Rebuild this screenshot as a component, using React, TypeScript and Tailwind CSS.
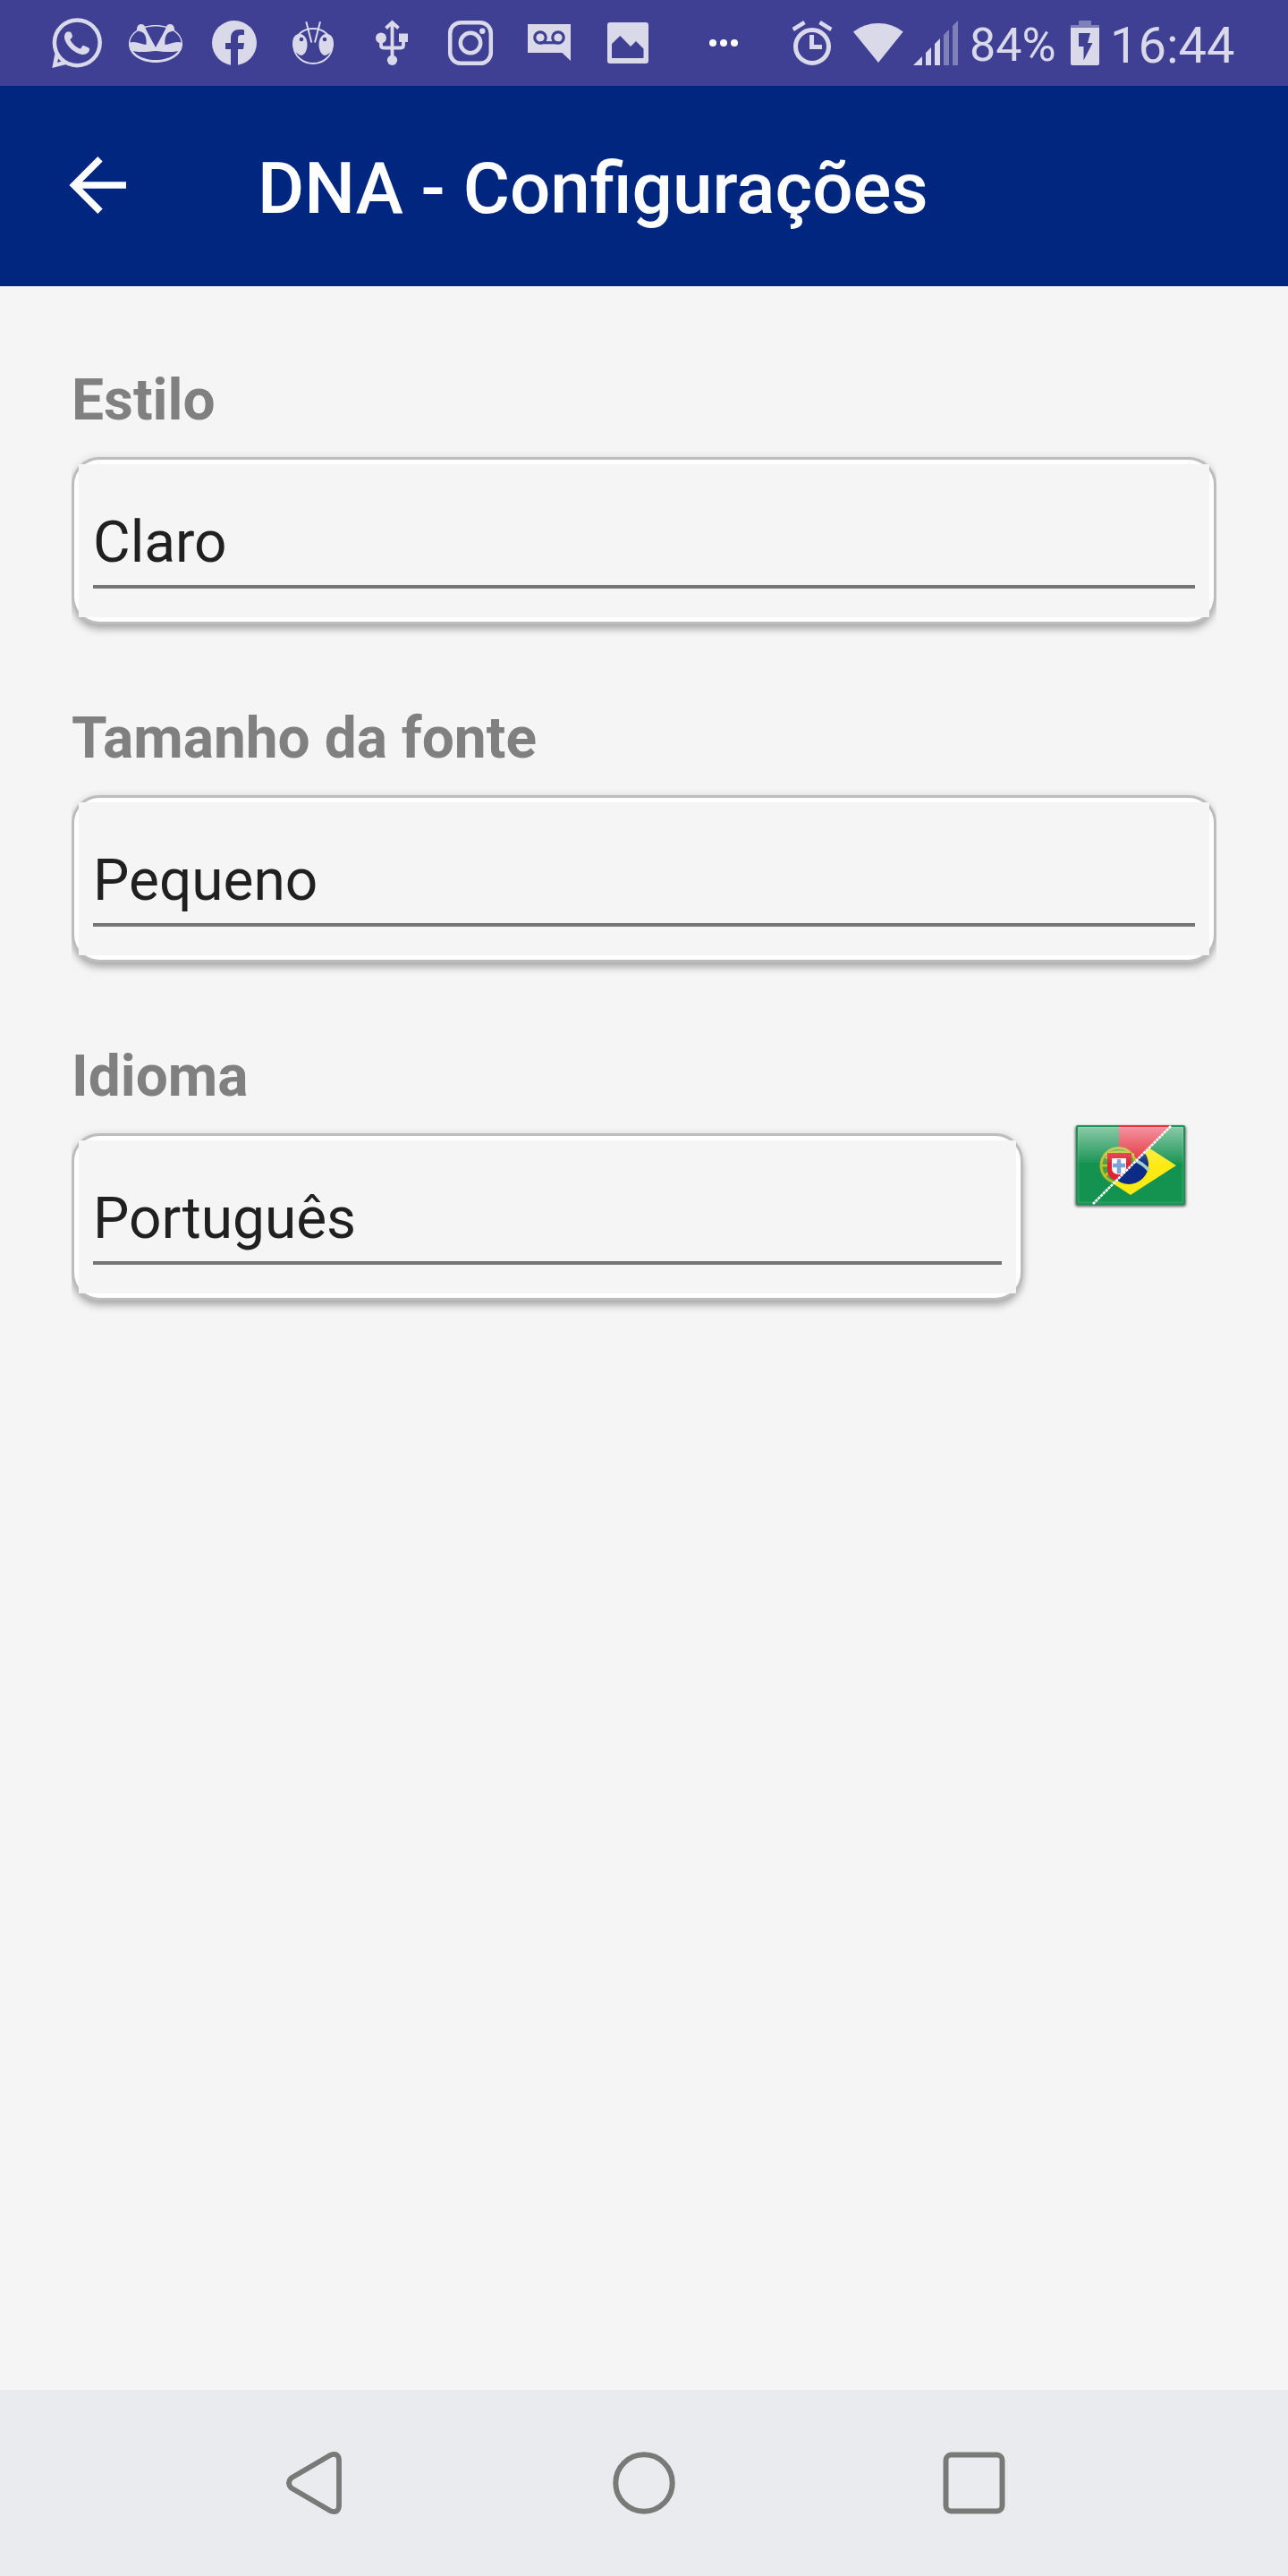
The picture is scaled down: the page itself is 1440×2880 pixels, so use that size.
import type { ReactNode } from 'react';

const INK = '#d9d9ea';
const BAR = '#3f4094';

/* Every status icon is drawn in screen coordinates; x is the left edge of its slot. */
function Slot({ x, w = 88, children }: { x: number; w?: number; children: ReactNode }) {
  return (
    <svg width={w} height={96} viewBox={`${x} 0 ${w} 96`} fill={INK} className="block shrink-0">
      {children}
    </svg>
  );
}

function StatusBar() {
  const arm =
    'M144 48 C152 45 158 50 163.5 50 C164 44 163 38 159 36 L153 34 C152.500 28 157 25.500 161 28 C163 33 170 46 174 53 V57 C165 58 152 59 145.500 56 Z';
  return (
    <header className="flex h-[96px] shrink-0 bg-[#3f4094] pl-[42px] text-[#d9d9ea]">
      <Slot x={42}>
        <circle cx="86.300" cy="47.800" r="25.400" fill="none" stroke={INK} strokeWidth="4.500" />
        <path d="M61.800 58 L58.300 76 L74 72 L72 67.500 L64 70 L66.500 61 Z" />
        <path d="M75 35.500 C72.500 37 71.800 39.500 72 42 C73 51 85 61 93 61 C97 61 100.500 58 100 54.500 C100 53.500 94 50.500 92.500 51 C91.500 51.500 91 54.500 89.500 54.500 C85 53 80.500 48.500 78.500 44.500 C78.500 43 81 42.500 81 40.500 C80.500 38 79.500 36 78.500 35.500 Z" />
      </Slot>
      <Slot x={130}>
        <path fillRule="evenodd" d="M174 28 C191 28 204 37 204 49 C204 61 191 70 174 70 C157 70 144 61 144 49 C144 37 157 28 174 28 Z M174 29.500 C158 29.500 145.500 38 145.500 48 C145.500 59 158 67 174 67 C190 67 202.500 59 202.500 48 C202.500 38 190 29.500 174 29.500 Z" />
        <path d={arm} />
        <path d={arm} transform="translate(348 0) scale(-1 1)" />
      </Slot>
      <Slot x={218}>
        <circle cx="262" cy="48" r="25" />
        <path fill={BAR} d="M258 74 V55 H252 V48 H258 V43 C258 36 262 33 267.500 33 C270 33 272 33.200 273 33.400 V39 H269.500 C267 39 266 40.500 266 43 V48 H273 L272 55 H266 V74 Z" />
      </Slot>
      <Slot x={306}>
        <ellipse cx="350" cy="51.500" rx="21.500" ry="19.500" fill="none" stroke={INK} strokeWidth="1.800" />
        <path d="M336 38 C341 39 343.500 44 343.500 50 C343.500 57 340 62 336.500 62 C331 60 327 56 327 49 C327 42 330 37.500 336 38 Z" />
        <path d="M364 38 C359 39 356.500 44 356.500 50 C356.500 57 360 62 363.500 62 C369 60 373 56 373 49 C373 42 370 37.500 364 38 Z" />
        <circle cx="337" cy="44" r="2.300" fill={BAR} />
        <circle cx="363" cy="44" r="2.300" fill={BAR} />
        <path d="M342.300 24.300 L348.300 47.500 M358 24.300 L352 47.500" stroke={INK} strokeWidth="2" />
      </Slot>
      <Slot x={394}>
        <path d="M431.500 31.500 L438.500 25 L445.500 31.500 M438.500 25 V64 M426 44 V50.500 Q426 53.500 429 53.500 H448 Q451 53.500 451 50.500 V44" fill="none" stroke={INK} strokeWidth="3.800" />
        <circle cx="426" cy="42.500" r="6" />
        <circle cx="438.500" cy="67.300" r="5.600" />
        <rect x="446" y="37.500" width="10" height="9.500" />
      </Slot>
      <Slot x={482}>
        <rect x="503.200" y="25.200" width="45.600" height="45.600" rx="12" fill="none" stroke={INK} strokeWidth="4.500" />
        <circle cx="526" cy="48" r="11.200" fill="none" stroke={INK} strokeWidth="4.500" />
        <circle cx="539.300" cy="34.700" r="3.200" />
      </Slot>
      <Slot x={570}>
        <path d="M590 27 H638 V68 L628.500 59 H590 Z" />
        <g fill="none" stroke={BAR} strokeWidth="3.200">
          <circle cx="604" cy="42" r="6.200" />
          <circle cx="624" cy="42" r="6.200" />
          <path d="M604 47.700 H624" />
        </g>
      </Slot>
      <Slot x={658}>
        <rect x="679" y="25" width="46" height="46" rx="3" />
        <path fill={BAR} d="M684 49 L693.300 40 L705 52 L711 46 L719.500 54.500 V65 H684 Z" />
      </Slot>
      <Slot x={746} w={126}>
        <g fill="#fff">
          <circle cx="797" cy="48" r="4" />
          <circle cx="809" cy="48" r="4" />
          <circle cx="821" cy="48" r="4" />
        </g>
      </Slot>
      <Slot x={872} w={72}>
        <circle cx="908" cy="52" r="18.500" fill="none" stroke={INK} strokeWidth="5" />
        <path d="M905 39 H910 V50 H919 V55 H905 Z" />
        <path d="M886.700 33 L899.500 25 M929.300 33 L916.500 25" stroke={INK} strokeWidth="4.500" />
      </Slot>
      <Slot x={944} w={70}>
        <path d="M954 35.500 Q966 26 982 26 Q998 26 1009.700 35.500 L982 70 Z" />
      </Slot>
      <Slot x={1014} w={70}>
        <path d="M1021 73 L1031 63 V73 Z M1035 59 L1041 53 V73 H1035 Z M1045 49 L1051 43 V73 H1045 Z" />
        <path d="M1055 39 L1061 33 V73 H1055 Z M1065 29 L1071 23 V73 H1065 Z" fill="#7f80b8" />
      </Slot>
      <span className="mt-[20px] block w-[106px] whitespace-nowrap text-[52px] leading-[62px]">84%</span>
      <Slot x={1190} w={51}>
        <path d="M1206 23 H1220 V28 H1229 V31 H1197 V28 H1206 Z" fill="#7f80b8" />
        <path d="M1197 31 H1229 V71 Q1229 73 1227 73 H1199 Q1197 73 1197 71 Z" />
        <path fill={BAR} d="M1206 37 H1219 L1216 48 H1221.500 L1211.500 67.500 V52 H1206 Z" />
      </Slot>
      <span className="mt-[18px] block whitespace-nowrap text-[56px] leading-[66px]">16:44</span>
    </header>
  );
}

function AppBar() {
  return (
    <div className="flex h-[224px] shrink-0 items-center bg-[#00267f] text-white">
      <svg width="80" height="80" viewBox="69 167 80 80" className="mb-[2px] ml-[69px] block shrink-0" fill="none" stroke="currentColor" strokeWidth="7.600">
        <path d="M112 177.800 L82.800 207 L112 236.200 M86 207 H141" />
      </svg>
      <h1 className="ml-[139px] mt-[6px] whitespace-nowrap text-[80px] font-medium leading-[94px]">DNA - Configurações</h1>
    </div>
  );
}

function Field({ label, value, width, aside }: { label: string; value: string; width: string; aside?: ReactNode }) {
  return (
    <section className="h-[378px] px-[80px]">
      <h2 className="h-[108px] whitespace-nowrap pt-[7px] text-[64px] font-bold leading-[76px] text-[#808080]">{label}</h2>
      <div className="flex overflow-x-clip">
        <div className={`${width} px-[3px] pt-[3px]`}>
          <div className="h-[181px] rounded-[28px] bg-white p-[5px] shadow-[0_0_0_3px_#bdbdbd,0_7px_9px_2px_rgba(0,0,0,0.26),0_0_8px_3px_rgba(0,0,0,0.12)]">
            <div className="h-[171px] bg-[#f5f5f5] px-[16px] pt-[50px]">
              <div className="h-[89px] whitespace-nowrap border-b-4 border-[#757575] text-[64px] leading-[76px] text-[#202020]">
                {value}
              </div>
            </div>
          </div>
        </div>
        {aside}
      </div>
    </section>
  );
}

function Flag() {
  return (
    <svg width="136" height="104" viewBox="1196 1251 136 104" className="ml-[52px] mt-[-16px] block shrink-0">
      <defs>
        <linearGradient id="gloss" x1="0" y1="0" x2="0" y2="1">
          <stop offset="0" stopColor="#fff" stopOpacity="0.5" />
          <stop offset="1" stopColor="#fff" stopOpacity="0.04" />
        </linearGradient>
        <clipPath id="upper"><path d="M1203 1258 H1310 L1222 1347 H1203 Z" /></clipPath>
        <clipPath id="lower"><path d="M1310 1258 H1325 V1347 H1222 Z" /></clipPath>
        <filter id="drop" x="-10%" y="-10%" width="120%" height="125%"><feGaussianBlur stdDeviation="1.800" /></filter>
      </defs>
      <rect x="1202" y="1259" width="124" height="90" rx="3" fill="#000" opacity="0.6" filter="url(#drop)" />
      <rect x="1203" y="1258" width="122" height="89" rx="2" fill="#149250" />
      <g clipPath="url(#upper)">
        <path d="M1251 1258 H1325 V1347 H1251 Z" fill="#e42a3b" />
        <circle cx="1250.500" cy="1303" r="19.500" fill="#4aa03c" stroke="#b9bd2a" strokeWidth="3" />
        <path d="M1231 1303 H1270 M1235 1291 Q1251 1284 1268 1291 M1235 1315 L1262 1290 M1236 1293 L1262 1317" stroke="#c3c52a" strokeWidth="2.500" fill="none" />
        <path d="M1238 1289 H1265 V1307 Q1264 1320 1251 1320 Q1238 1319 1238 1307 Z" fill="#de2433" />
        <path d="M1243 1295 H1259 V1306 Q1258 1313 1251 1313 Q1243 1313 1243 1306 Z" fill="#fff" />
        <path d="M1251 1296 V1312 M1244 1303 H1258" stroke="#7ba3d8" strokeWidth="4.500" />
      </g>
      <g clipPath="url(#lower)">
        <path d="M1264 1270 L1315 1303 L1264 1336 L1213 1303 Z" fill="#fdea14" />
        <circle cx="1262" cy="1302" r="22" fill="#0b2b86" />
        <path d="M1268 1297 Q1277 1300 1284 1308" stroke="#9fd3c8" strokeWidth="3.500" fill="none" />
      </g>
      <path d="M1205 1260 H1323 V1300 H1205 Z" fill="url(#gloss)" />
      <rect x="1205.500" y="1260.500" width="117" height="84" fill="none" stroke="#fff" strokeOpacity="0.1" strokeWidth="2" />
      <path d="M1309 1259 L1222 1346" stroke="#fff" strokeWidth="2.600" strokeDasharray="3.200 0.800" />
    </svg>
  );
}

function NavBar() {
  return (
    <nav className="flex h-[208px] shrink-0 items-center bg-[#e9ebee] pl-[311px]">
      <svg width="80" height="80" viewBox="311 2736 80 80" className="block" fill="none" stroke="#787a78" strokeWidth="5.800" strokeLinejoin="round">
        <path d="M325.500 2770.500 L369.500 2744.800 Q378.800 2741.500 379 2751 V2801 Q378.800 2810.500 369.500 2807.200 L325.500 2781.500 Q320.500 2776 325.500 2770.500 Z" />
      </svg>
      <svg width="80" height="80" viewBox="680 2736 80 80" className="ml-[289px] block" fill="none" stroke="#787a78" strokeWidth="6">
        <circle cx="720" cy="2776" r="31.700" />
      </svg>
      <svg width="80" height="80" viewBox="1049 2736 80 80" className="ml-[289px] block" fill="none" stroke="#787a78" strokeWidth="6">
        <rect x="1057.500" y="2744.500" width="63" height="63" rx="6" />
      </svg>
    </nav>
  );
}

export default function App() {
  return (
    <div className="flex h-[2880px] w-[1440px] flex-col overflow-hidden bg-[#f5f5f5] font-['Roboto',sans-serif]">
      <StatusBar />
      <AppBar />
      <main className="flex-1 pt-[83px]">
        <Field label="Estilo" value="Claro" width="w-[1280px]" />
        <Field label="Tamanho da fonte" value="Pequeno" width="w-[1280px]" />
        <Field label="Idioma" value="Português" width="w-[1064px]" aside={<Flag />} />
      </main>
      <NavBar />
    </div>
  );
}
